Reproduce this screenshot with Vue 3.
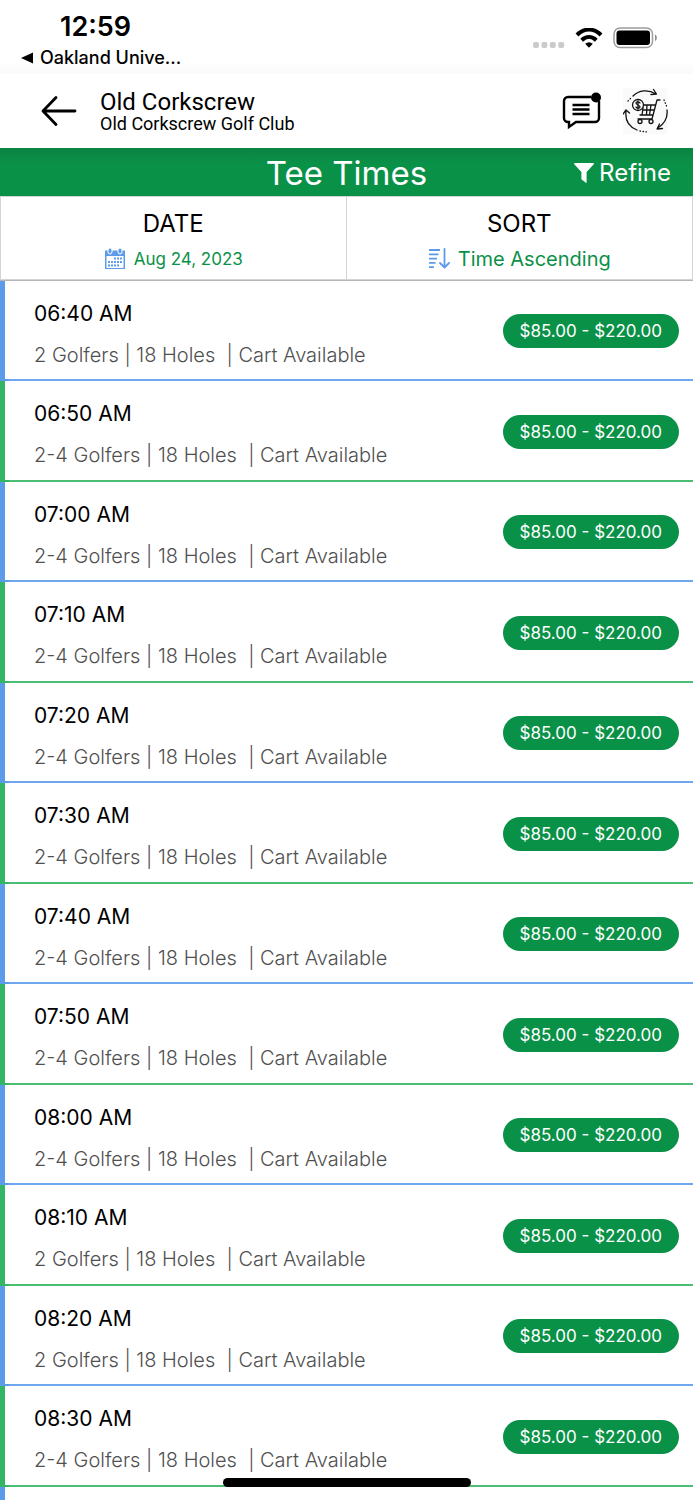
<script setup>
const times = [
  ['06:40 AM', '2'],
  ['06:50 AM', '2-4'],
  ['07:00 AM', '2-4'],
  ['07:10 AM', '2-4'],
  ['07:20 AM', '2-4'],
  ['07:30 AM', '2-4'],
  ['07:40 AM', '2-4'],
  ['07:50 AM', '2-4'],
  ['08:00 AM', '2-4'],
  ['08:10 AM', '2'],
  ['08:20 AM', '2'],
  ['08:30 AM', '2-4'],
].map(([time, golfers]) => ({ time, golfers, price: '$85.00 - $220.00' }))
const calendarRows = [
  [2, 3, 4],
  [0, 1, 2, 3, 4],
  [0, 1, 2, 3],
]
</script>

<template>
  <div class="screen">
    <div class="status">
      <div class="status-left">
        <div class="clock">12:59</div>
        <a class="return" href="#">
          <svg width="12" height="12" viewBox="0 0 12 12" aria-hidden="true"><path d="M0 6 12 0.5v11z" /></svg>
          <span>Oakland Unive...</span>
        </a>
      </div>
      <div class="status-right">
        <svg class="signal" width="32" height="6" viewBox="0 0 32 6" aria-hidden="true">
          <rect v-for="n in 4" :key="n" :x="(n - 1) * 8.4" y="0" width="6" height="6" rx="2" fill="#cbcbcb" />
        </svg>
        <svg class="wifi" width="28" height="20" viewBox="0 0 28 20" aria-hidden="true">
          <g fill="none" stroke="#000" stroke-width="4">
            <path d="M2 7C9-.2 19-.2 26 7" />
            <path d="M6.700 12.200c4.400-4.200 10.200-4.200 14.600 0" />
          </g>
          <path d="M10.200 15.800c2.400-2 5.200-2 7.600 0L14 19.800z" />
        </svg>
        <svg width="45" height="22" viewBox="0 0 45 22" aria-hidden="true">
          <rect x="1" y="1" width="38.500" height="19.500" rx="6" fill="#fff" stroke="#9c9c9c" stroke-width="1.500" />
          <rect x="3.500" y="3.600" width="33.500" height="14.400" rx="3" />
          <path d="M42 7.500c2.400 1.200 2.400 5.400 0 6.600z" fill="#8c8c8c" />
        </svg>
      </div>
    </div>

    <header class="club">
      <button class="icon-button" aria-label="Back">
        <svg width="38" height="32" viewBox="0 0 38 32" fill="none" stroke="#000" stroke-width="2.800" stroke-linecap="round" stroke-linejoin="round">
          <path d="M35 16H3M16 2.500 3 16l13 13.500" />
        </svg>
      </button>
      <div class="names">
        <h1>Old Corkscrew</h1>
        <p>Old Corkscrew Golf Club</p>
      </div>
      <button class="icon-button chat" aria-label="Messages">
        <svg width="40" height="38" viewBox="0 0 40 38" fill="none" stroke="#000" stroke-width="2.400">
          <path d="M29 5H6a4 4 0 0 0-4 4v17a4 4 0 0 0 4 4h1v5l7-5h19a4 4 0 0 0 4-4V9" />
          <path d="M10.500 13h17M10.500 17.500h17M10.500 22h17" />
          <circle cx="34" cy="5.500" r="5" fill="#000" stroke="none" />
        </svg>
      </button>
      <button class="icon-button cart" aria-label="Cart">
        <svg width="46" height="46" viewBox="0 0 46 46" fill="none" stroke="#111" stroke-width="1.300" stroke-linecap="round" stroke-linejoin="round">
          <rect width="44" height="46" fill="#fafafa" stroke="none" />
          <path d="M10 8C16 2 25 1 33 6M30.500 1.500 33.500 6l-5.500.500" />
          <path d="M44 22c1 8-3 14-9 18M36.500 36 34 41l5.500-.500" />
          <path d="M14 42C6 39 2 32 3 23M0 26l3-4 3.500 3" />
          <path d="M5 13l3-3M41 12l3 7M17 43l7 1" stroke-dasharray="0.500 2.500" />
          <path d="M37 12h-3l-5 19H15M20 17h12M20 22h11M17 27h13M20 20l-1 7M24 17l-.500 10M28 17l-1.500 10" />
          <circle cx="17" cy="33.500" r="2" />
          <circle cx="28" cy="33.500" r="2" />
          <circle cx="15" cy="17" r="5.500" fill="#fff" />
          <path d="M17 15c-1-2-4-1-4 0 0 2 4 2 4 4 0 1-3 2-4 0M15 13v8" />
        </svg>
      </button>
    </header>

    <div class="title-bar">
      <h2>Tee Times</h2>
      <button class="refine">
        <svg width="20" height="20" viewBox="0 0 20 20" fill="#fff" aria-hidden="true"><path d="M.6 0h18.800q1 .4.300 1.300L12.600 9v10.500q-.4.600-1 .1L7.900 16.800q-.5-.4-.5-1V9L.3 1.300Q-.3.400.6 0z" /></svg>
        <span>Refine</span>
      </button>
    </div>

    <div class="options">
      <button class="option">
        <span class="option-title">DATE</span>
        <span class="option-value date">
          <svg width="22" height="22" viewBox="0 0 22 22" aria-hidden="true">
            <path d="M1 2.500h20V21H1z" fill="#5b9bea" />
            <path d="M2.500 8h17v12h-17z" fill="#fff" />
            <g fill="#5b9bea" stroke="#fff" stroke-width="1"><rect x="4" y="0" width="4" height="6" rx="2" /><rect x="14" y="0" width="4" height="6" rx="2" /></g>
            <g fill="#5b9bea">
              <template v-for="(row, r) in calendarRows" :key="r">
                <rect v-for="c in row" :key="c" :x="4 + c * 3" :y="9.500 + r * 3.500" width="2" height="2" />
              </template>
            </g>
          </svg>
          <span>Aug 24, 2023</span>
        </span>
      </button>
      <button class="option">
        <span class="option-title">SORT</span>
        <span class="option-value sort">
          <svg width="22" height="22" viewBox="0 0 22 22" fill="none" stroke="#5b9bea" stroke-width="1.800" aria-hidden="true">
            <path d="M1 2h11M1 6.300h9.500M1 10.600h8M1 14.900h6.500M1 19.200h5" />
            <path d="M16.500 1v18M12 15l4.500 4.500L21 15" stroke-linecap="round" stroke-linejoin="round" />
          </svg>
          <span>Time Ascending</span>
        </span>
      </button>
    </div>

    <ul class="list">
      <li v-for="t in times" :key="t.time" class="row">
        <div class="details">
          <div class="time">{{ t.time }}</div>
          <div class="info">{{ t.golfers }} Golfers | 18 Holes &nbsp;| Cart Available</div>
        </div>
        <button class="price">{{ t.price }}</button>
      </li>
      <li class="row rest" aria-hidden="true"></li>
    </ul>
    <div class="home"></div>
  </div>
</template>

<style>
body {
  background: #fff;
}
</style>

<style scoped>
.screen {
  display: flex;
  flex-direction: column;
  height: 100vh;
  overflow: hidden;
  color: #000;
  background: #fff;
  font-family: Inter, "Liberation Sans", sans-serif;
}
button {
  padding: 0;
  border: 0;
  background: none;
  color: inherit;
  font: inherit;
  cursor: pointer;
}
h1,
h2,
p {
  margin: 0;
  font-weight: 400;
}
svg {
  display: block;
  flex: none;
}
.status {
  display: flex;
  justify-content: space-between;
  flex: none;
  box-sizing: border-box;
  height: 74px;
  padding: 11px 35px 0 21px;
  background: linear-gradient(#fff 60px, #fafafa);
}
.clock {
  padding-left: 39px;
  font-size: 27px;
  font-weight: 600;
  line-height: 32px;
}
.return {
  display: flex;
  align-items: center;
  gap: 7px;
  color: #000;
  font-size: 18px;
  font-weight: 500;
  line-height: 30px;
  text-decoration: none;
}
.status-right {
  display: flex;
  align-items: center;
  height: 54px;
}
.signal {
  margin: 14px 10px 0 0;
}
.wifi {
  margin-right: 10px;
}
.club {
  display: flex;
  align-items: center;
  flex: none;
  height: 74px;
  padding: 0 24px 0 40px;
  font-family: Roboto, sans-serif;
}
.names {
  flex: 1;
  margin-left: 22px;
  padding-top: 1px;
}
.names h1 {
  font-size: 24px;
  line-height: 24px;
}
.names p {
  font-size: 18px;
  line-height: 20px;
}
.chat {
  margin-right: 21px;
}
.title-bar {
  display: grid;
  grid-template-columns: 1fr auto 1fr;
  align-items: center;
  flex: none;
  height: 48px;
  padding: 0 22px;
  color: #fff;
  background: linear-gradient(#0a8442, #0a9148 16px);
}
.title-bar h2 {
  grid-column: 2;
  padding-top: 2px;
  font-size: 33px;
  line-height: 46px;
}
.refine {
  display: flex;
  align-items: center;
  justify-self: end;
  gap: 5px;
  padding-top: 2px;
  font-size: 24px;
  line-height: 46px;
}
.options {
  display: grid;
  grid-template-columns: 1fr 1fr;
  flex: none;
  border-bottom: 1px solid #b5b5b5;
}
.option {
  display: flex;
  flex-direction: column;
  align-items: center;
  gap: 6px;
  padding: 11px 0 7px;
  border: 1px solid #d4d4d4;
}
.option + .option {
  border-left: 0;
}
.option-title {
  font-size: 24px;
  line-height: 32px;
}
.option-value {
  display: flex;
  align-items: center;
  gap: 8px;
  color: #0a9148;
  line-height: 26px;
}
.date {
  font-size: 17px;
}
.sort {
  font-size: 20px;
}
.list {
  display: flex;
  flex-direction: column;
  flex: 1;
  margin: 0;
  padding: 0;
  list-style: none;
}
.row {
  display: flex;
  align-items: center;
  justify-content: space-between;
  flex: none;
  box-sizing: border-box;
  min-height: 100px;
  padding: 0 14px 0 29px;
  border-bottom: 2px solid;
  border-image: linear-gradient(90deg, #5b9bea 5px, #6ea7ee 5px) 1;
  border-left: 5px solid;
}
.row:nth-child(even) {
  min-height: 101px;
  border-image: linear-gradient(90deg, #34b563 5px, #4dbd76 5px) 1;
}
.rest {
  flex: 1;
  min-height: 0;
  border-bottom: 0;
}
.details {
  padding-top: 8px;
}
.time {
  font-size: 21px;
  line-height: 30px;
}
.info {
  margin-top: 11px;
  color: #505050;
  font-size: 20px;
  font-weight: 300;
  line-height: 30px;
}
.price {
  margin-top: 2px;
  padding: 0 17px;
  border-radius: 17px;
  color: #fff;
  background: #0a9148;
  font-size: 17px;
  line-height: 34px;
}
.home {
  position: fixed;
  bottom: 13px;
  left: 50%;
  width: 248px;
  height: 9px;
  margin-left: -124px;
  border-radius: 5px;
  background: #000;
}
</style>
